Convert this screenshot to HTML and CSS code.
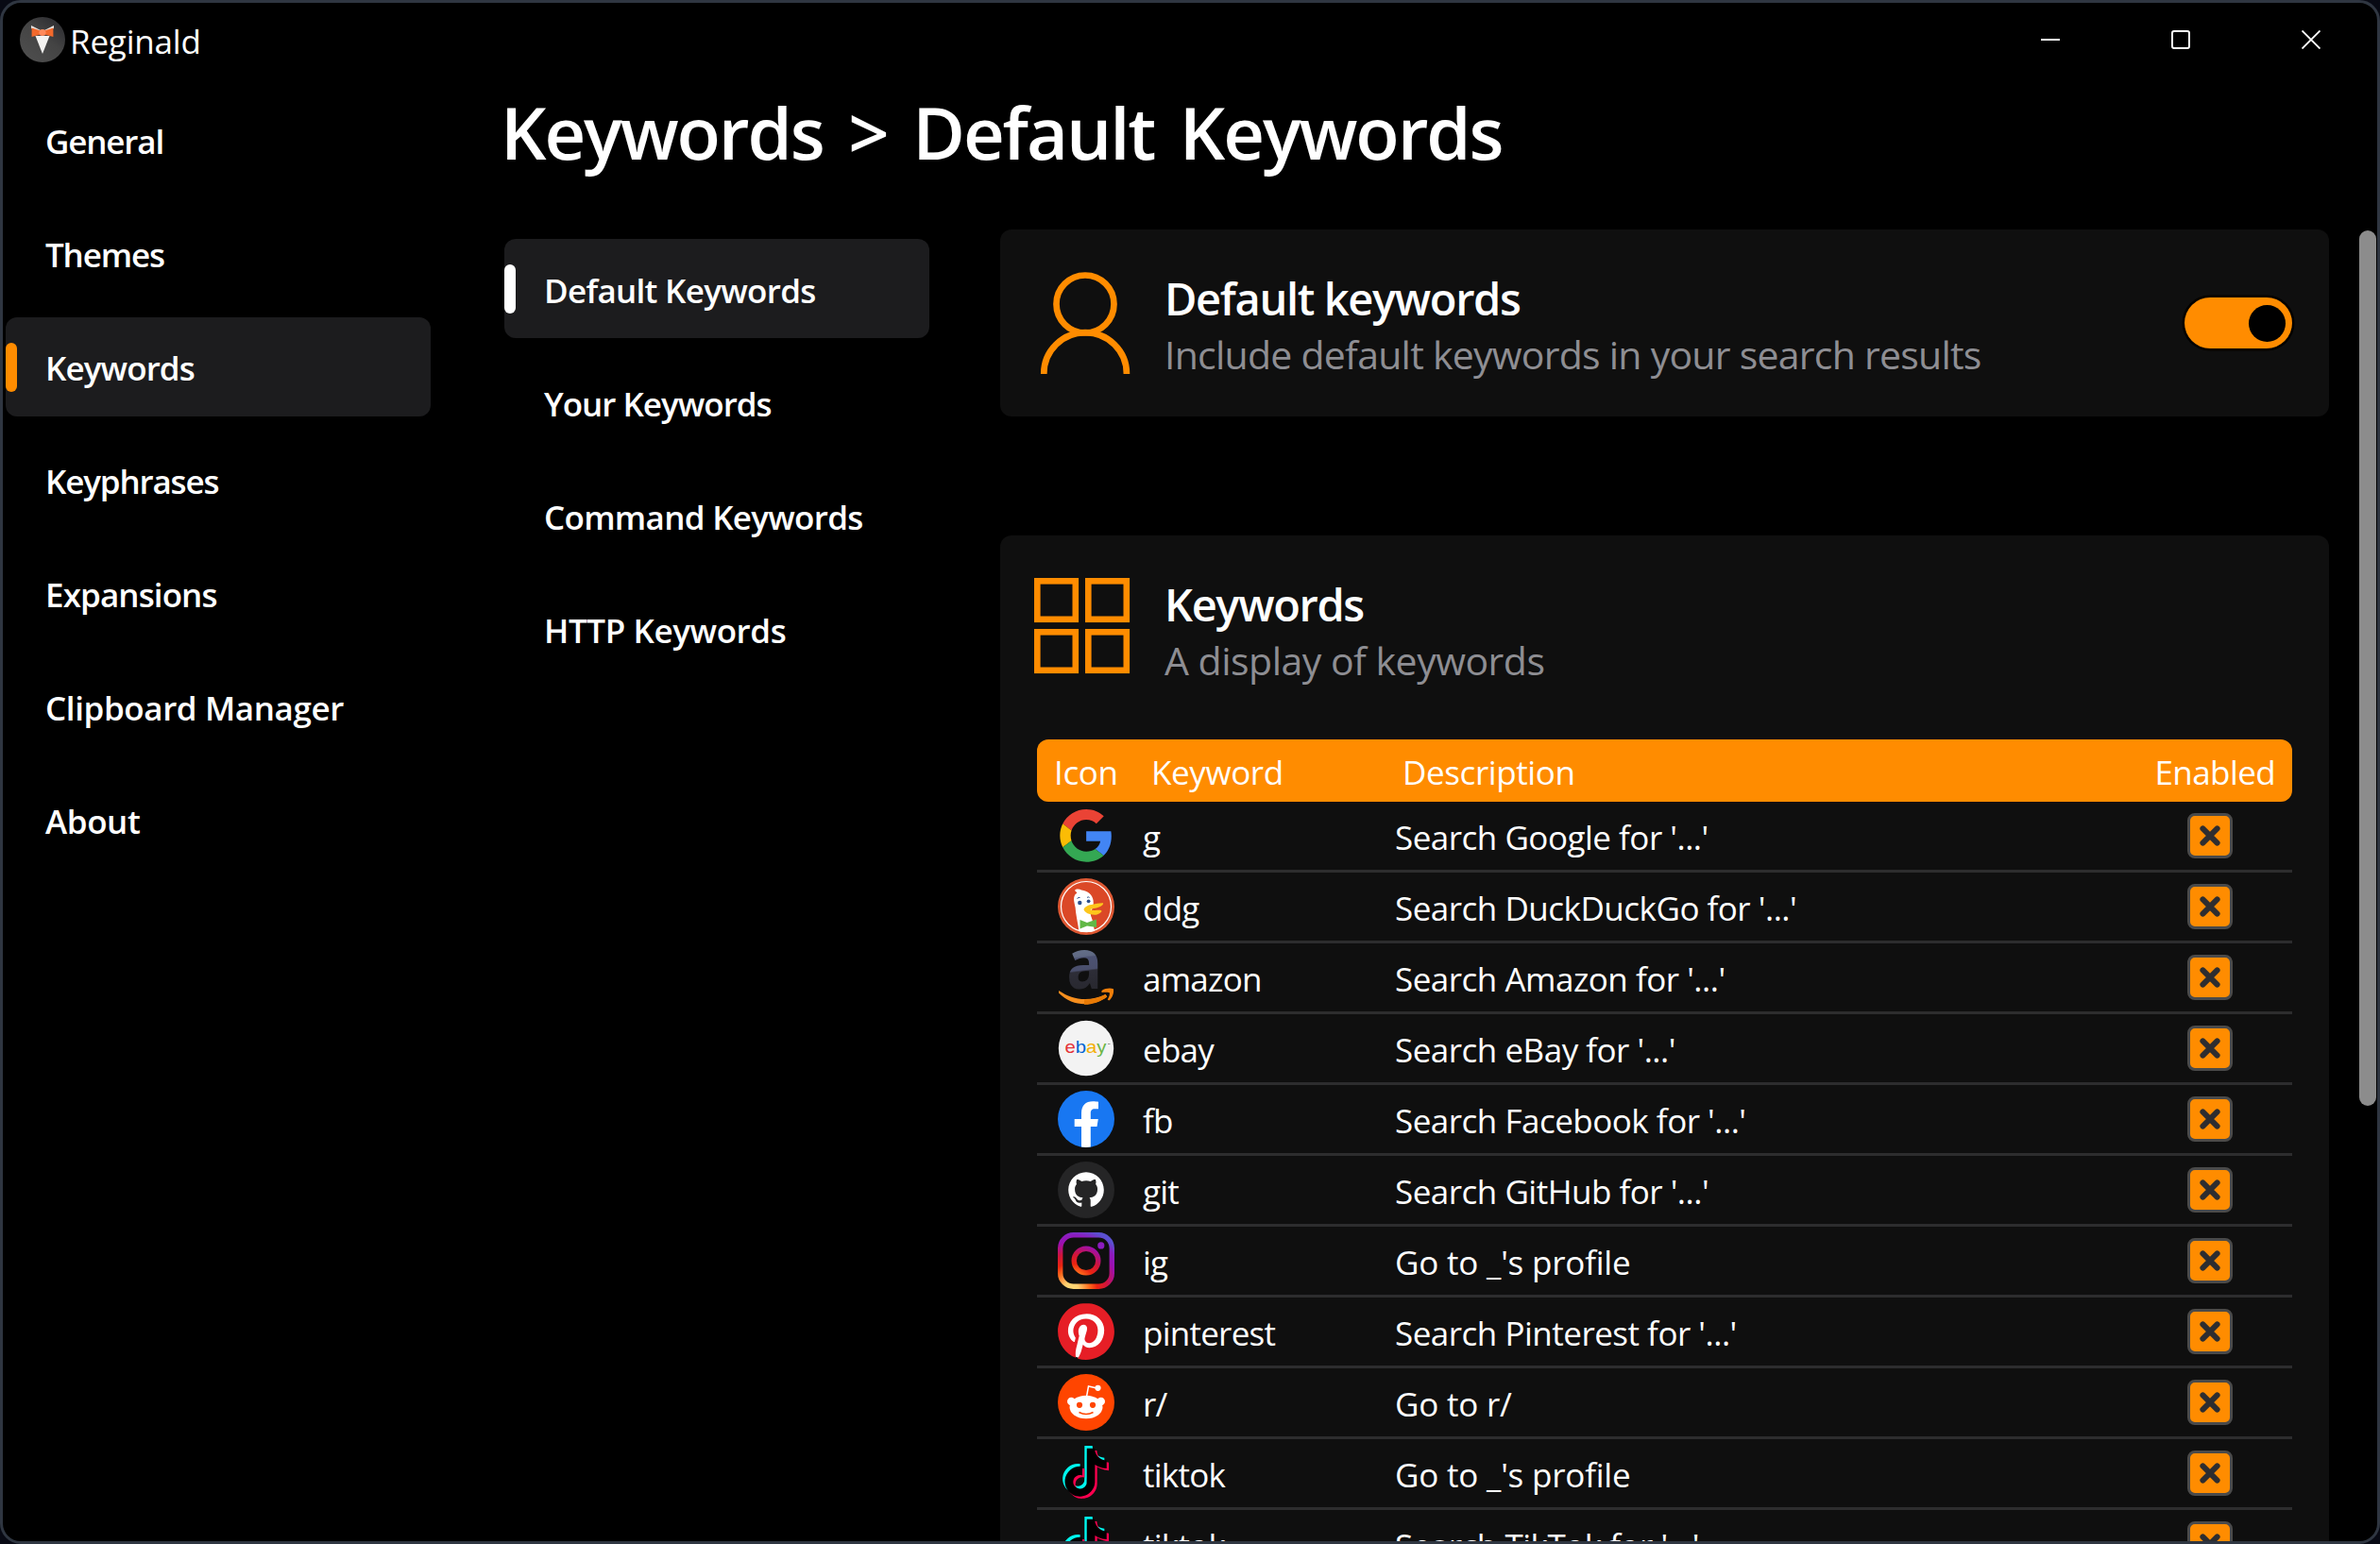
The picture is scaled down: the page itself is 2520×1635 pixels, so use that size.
FILE: index.html
```
<!DOCTYPE html>
<html lang="en">
<head>
<meta charset="utf-8">
<title>Reginald</title>
<link rel="stylesheet" href="styles.css">
</head>
<body>
<svg class="defs" aria-hidden="true">
  <defs>
    <path id="note" d="M12.525.02c1.31-.02 2.61-.01 3.91-.02.08 1.53.63 3.09 1.75 4.17 1.12 1.11 2.7 1.62 4.24 1.79v4.03c-1.44-.05-2.89-.35-4.2-.97-.57-.26-1.1-.59-1.62-.93-.01 2.92.01 5.84-.02 8.75-.08 1.4-.54 2.79-1.35 3.94-1.31 1.92-3.58 3.17-5.91 3.21-1.43.08-2.86-.31-4.08-1.03-2.02-1.19-3.44-3.37-3.65-5.71-.02-.5-.03-1-.01-1.49.18-1.9 1.12-3.72 2.58-4.96 1.66-1.44 3.98-2.13 6.15-1.72.02 1.48-.04 2.96-.04 4.44-.99-.32-2.15-.23-3.02.37-.63.41-1.11 1.04-1.36 1.75-.21.51-.15 1.07-.14 1.61.24 1.64 1.82 3.02 3.5 2.87 1.12-.01 2.19-.66 2.77-1.61.19-.33.4-.67.41-1.06.1-1.79.06-3.57.07-5.36.01-4.03-.01-8.05.02-12.07z"/>
    <symbol id="tiktok" viewBox="0 0 60 60">
      <use href="#note" transform="translate(1.800 1) scale(2.120)" fill="#00f7ef"/>
      <use href="#note" transform="translate(6.500 6) scale(2.120)" fill="#ff004f"/>
      <use href="#note" transform="translate(4.200 3.800) scale(2.120)" fill="#000"/>
    </symbol>
    <symbol id="cross" viewBox="0 0 22 22">
      <path d="M3.4 3.4 18.6 18.6M18.6 3.4 3.4 18.6" stroke="#2d2d30" stroke-width="6" stroke-linecap="round"/>
    </symbol>
    <linearGradient id="logo-bg" x1="0" y1="1" x2=".8" y2="0">
      <stop offset="0" stop-color="#505050"/><stop offset=".6" stop-color="#444"/><stop offset="1" stop-color="#2c2c30"/>
    </linearGradient>
    <linearGradient id="amazon-a" gradientUnits="userSpaceOnUse" x1="24" y1="1" x2="29" y2="43">
      <stop offset="0" stop-color="#646f88"/><stop offset=".16" stop-color="#5f6983"/><stop offset=".2" stop-color="#4c5272"/><stop offset=".5" stop-color="#4a4f6c"/><stop offset=".54" stop-color="#2d2d37"/><stop offset="1" stop-color="#28282f"/>
    </linearGradient>
    <radialGradient id="insta" gradientUnits="userSpaceOnUse" cx="14" cy="61" r="66">
      <stop offset="0" stop-color="#ffdd78"/><stop offset=".12" stop-color="#ffd070"/><stop offset=".3" stop-color="#ff6a1c"/><stop offset=".42" stop-color="#ea2410"/><stop offset=".58" stop-color="#d0143c"/><stop offset=".76" stop-color="#9c10b0"/><stop offset=".88" stop-color="#8c1cc0"/><stop offset="1" stop-color="#5a50d0"/>
    </radialGradient>
  </defs>
</svg>

<div class="window">
  <header class="titlebar">
    <svg class="logo" viewBox="0 0 48 48">
      <circle cx="24" cy="24" r="24" fill="url(#logo-bg)"/>
      <path d="M16.5 20h15L24 39z" fill="#f4f3f1"/>
      <path d="M12 9l10 5h4l10-5v3l-9 5h-6l-9-5z" fill="#e4e2e0"/>
      <path d="M12.600 11.500L22 14.500h4l9.400-3V21L26 18.500h-4L12.600 21z" fill="#f2692c"/>
      <circle cx="24" cy="16.500" r="3.600" fill="#ff8a5c"/>
    </svg>
    <span class="app-name">Reginald</span>
    <div class="controls">
      <svg viewBox="0 0 20 20"><path d="M0 10h20" stroke="#fff" stroke-width="2"/></svg>
      <svg viewBox="0 0 20 20"><rect x="1" y="1" width="18" height="18" rx="2" fill="none" stroke="#fff" stroke-width="2"/></svg>
      <svg viewBox="0 0 20 20"><path d="M.5.5l19 19M19.500.5L.5 19.500" stroke="#fff" stroke-width="1.800"/></svg>
    </div>
  </header>

  <div class="body">
    <nav class="menu sidebar">
      <a class="item tight">General</a>
      <a class="item tight">Themes</a>
      <a class="item active">Keywords</a>
      <a class="item tight">Keyphrases</a>
      <a class="item">Expansions</a>
      <a class="item loose">Clipboard Manager</a>
      <a class="item loose">About</a>
    </nav>

    <main>
      <h1>Keywords &gt; Default Keywords</h1>
      <div class="columns">
        <nav class="menu subnav">
          <a class="item active">Default Keywords</a>
          <a class="item tight">Your Keywords</a>
          <a class="item">Command Keywords</a>
          <a class="item loose">HTTP Keywords</a>
        </nav>

        <div class="panel">
          <section class="card setting">
            <svg class="card-icon" viewBox="0 0 102 110">
              <g fill="none" stroke="#ff8c00" stroke-width="6.700">
                <circle cx="54" cy="34" r="30.500"/>
                <path d="M10.300 108V107.500a43.800 43.300 0 0 1 87.600 0V108"/>
              </g>
            </svg>
            <div class="heading">
              <h2>Default keywords</h2>
              <p class="long">Include default keywords in your search results</p>
            </div>
            <div class="toggle"><span class="knob"></span></div>
          </section>

          <section class="card list">
            <div class="list-head">
              <svg class="card-icon" viewBox="0 0 102 102">
                <g fill="none" stroke="#ff8c00" stroke-width="6.600">
                  <rect x="3.300" y="3.300" width="40.500" height="40.500"/>
                  <rect x="57.300" y="3.300" width="40.500" height="40.500"/>
                  <rect x="3.300" y="57.300" width="40.500" height="40.500"/>
                  <rect x="57.300" y="57.300" width="40.500" height="40.500"/>
                </g>
              </svg>
              <div class="heading">
                <h2>Keywords</h2>
                <p>A display of keywords</p>
              </div>
            </div>

            <div class="thead">
              <span>Icon</span><span>Keyword</span><span class="desc">Description</span><span class="enabled">Enabled</span>
            </div>

            <div class="row">
              <svg class="icon" viewBox="0 0 60 60">
                <g transform="translate(2.300 2) scale(1.160)">
                  <path fill="#ea4335" d="M24 9.500c3.540 0 6.710 1.220 9.210 3.600l6.850-6.850C35.900 2.380 30.470 0 24 0 14.620 0 6.510 5.380 2.560 13.220l7.980 6.190C12.430 13.720 17.740 9.500 24 9.500z"/>
                  <path fill="#4285f4" d="M46.980 24.550c0-1.570-.15-3.090-.38-4.550H24v9.020h12.940c-.58 2.960-2.260 5.480-4.780 7.180l7.730 6c4.510-4.180 7.090-10.360 7.090-17.650z"/>
                  <path fill="#fbbc05" d="M10.530 28.590c-.48-1.450-.76-2.990-.76-4.590s.27-3.140.76-4.590l-7.980-6.190C.92 16.460 0 20.120 0 24c0 3.880.92 7.540 2.560 10.780l7.970-6.190z"/>
                  <path fill="#34a853" d="M24 48c6.480 0 11.930-2.130 15.890-5.810l-7.730-6c-2.150 1.450-4.920 2.300-8.160 2.300-6.260 0-11.570-4.220-13.470-9.910l-7.980 6.190C6.510 42.620 14.620 48 24 48z"/>
                </g>
              </svg>
              <span class="key">g</span><span>Search Google for '...'</span><i class="check"><svg><use href="#cross"/></svg></i>
            </div>
            <div class="row">
              <svg class="icon" viewBox="0 0 60 60">
                <circle cx="30" cy="30" r="30" fill="#de5833"/>
                <circle cx="30" cy="30" r="26.500" fill="#db4827" stroke="#fff" stroke-width="1.200"/>
                <path d="M18 13c1-2 5-1.800 7-.6 7 .8 11.500 5 12.600 11 .8 5-1 9-2.600 12-1 3 1 6 2 10l2 10.600c-5 1.500-11 1.500-16.500.2C21 46 19 38 18.600 31c-.8-5-2.600-9-.6-13 .4-1 1.500-2 2.500-2.600z" fill="#fff"/>
                <path d="M27.500 33c1-3 5-4.800 9.500-5.300 3.500-.3 6.500-1.700 11-1.400 1 1.700-3.500 4.400-7 5.200-2 .4-5 .6-6.500 1.600 2 1.400 7 .4 11.500.8 1.500 1.500-1.500 3.200-4.500 4.600-6 1-13-1.500-14-5.500z" fill="#fdc61c"/>
                <circle cx="23.300" cy="26" r="2.200" fill="#2d4f8e"/><circle cx="32.600" cy="24.300" r="1.900" fill="#2d4f8e"/>
                <path d="M20.500 21.500q1.500-1.500 3-1M31 20.400q1.500-1 2.600 0" stroke="#2d4f8e" fill="none"/>
                <path d="M23.500 44l7.500 3 10-3.500v8.500L31 50.500l-7.500 3z" fill="#61b846"/>
              </svg>
              <span class="key">ddg</span><span>Search DuckDuckGo for '...'</span><i class="check"><svg><use href="#cross"/></svg></i>
            </div>
            <div class="row">
              <svg class="icon" viewBox="0 0 60 60">
                <text class="amazon-letter" x="9.500" y="42" textLength="37" lengthAdjust="spacingAndGlyphs" fill="url(#amazon-a)">a</text>
                <path d="M1.200 44C16 54.500 34 56 50.500 48l1.800 2.500C38 61 16 62 1 46.500z" fill="#f78f1e"/>
                <path d="M28 53.500c9 0 16-2 22.500-5.500l1.800 2.500C45 56 36 59 28 58.800z" fill="#e87a05"/>
                <path d="M46.500 44c4-2.600 9-3 12.500-1.800.6 4-1 9.500-4.800 12.400l-1.500-1c1.500-3 2.500-5.200 2.100-7.400-2.500-.8-5.500-.5-8.300-.2z" fill="#f07f0a"/>
              </svg>
              <span class="key">amazon</span><span>Search Amazon for '...'</span><i class="check"><svg><use href="#cross"/></svg></i>
            </div>
            <div class="row">
              <svg class="icon" viewBox="0 0 60 60">
                <circle cx="30" cy="30" r="29.200" fill="#f3f3f3"/>
                <text class="ebay-letters" x="7.500" y="35" textLength="44" lengthAdjust="spacingAndGlyphs"><tspan fill="#e53238">e</tspan><tspan fill="#0064d2">b</tspan><tspan fill="#f5af02">a</tspan><tspan fill="#6cb544">y</tspan></text>
                <path d="M53 25.500h2.500" stroke="#999"/>
              </svg>
              <span class="key">ebay</span><span>Search eBay for '...'</span><i class="check"><svg><use href="#cross"/></svg></i>
            </div>
            <div class="row">
              <svg class="icon" viewBox="0 0 60 60">
                <circle cx="30" cy="30" r="30" fill="#1877f2"/>
                <path d="M25 59.600V38h-7.300v-8H25v-6c0-8.500 4.500-12.800 12-12.800 2.500 0 4.600.2 6 .5v7.600h-3.700c-3.500 0-4.500 1.900-4.500 4.400V30h8l-1.300 8h-6.700v21.600c-3 .5-7 .5-9.800 0z" fill="#fff"/>
              </svg>
              <span class="key">fb</span><span>Search Facebook for '...'</span><i class="check"><svg><use href="#cross"/></svg></i>
            </div>
            <div class="row">
              <svg class="icon" viewBox="0 0 60 60">
                <circle cx="30" cy="30" r="30" fill="#252526"/>
                <path transform="translate(11.200 11.200) scale(2.350)" fill="#fff" d="M8 0C3.580 0 0 3.580 0 8c0 3.540 2.290 6.530 5.470 7.590.4.070.55-.17.55-.38 0-.19-.01-.82-.01-1.490-2.010.37-2.530-.49-2.690-.94-.09-.23-.48-.94-.82-1.130-.28-.15-.68-.52-.01-.53.63-.01 1.080.58 1.230.82.72 1.210 1.870.87 2.330.66.07-.52.28-.87.51-1.070-1.780-.2-3.640-.89-3.640-3.950 0-.87.31-1.590.82-2.150-.08-.2-.36-1.020.08-2.120 0 0 .67-.21 2.200.82.64-.18 1.320-.27 2-.27s1.360.09 2 .27c1.530-1.040 2.200-.82 2.200-.82.44 1.100.16 1.920.08 2.120.51.56.82 1.270.82 2.150 0 3.070-1.870 3.750-3.650 3.950.29.25.54.73.54 1.480 0 1.070-.01 1.930-.01 2.200 0 .21.15.46.55.38A8.010 8.010 0 0 0 16 8c0-4.420-3.580-8-8-8z"/>
              </svg>
              <span class="key">git</span><span>Search GitHub for '...'</span><i class="check"><svg><use href="#cross"/></svg></i>
            </div>
            <div class="row">
              <svg class="icon" viewBox="0 0 60 60">
                <g fill="none" stroke="url(#insta)" stroke-width="5.400">
                  <rect x="2.700" y="2.700" width="54.600" height="54.600" rx="14"/>
                  <circle cx="30" cy="30" r="12.800"/>
                </g>
                <circle cx="45.800" cy="13.900" r="3.600" fill="#8c1cc0"/>
              </svg>
              <span class="key">ig</span><span class="wide">Go to _'s profile</span><i class="check"><svg><use href="#cross"/></svg></i>
            </div>
            <div class="row">
              <svg class="icon" viewBox="0 0 24 24">
                <circle cx="12" cy="12" r="11.600" fill="#fff"/>
                <path fill="#e61e26" d="M12.017 0C5.396 0 .029 5.367.029 11.987c0 5.079 3.158 9.417 7.618 11.162-.105-.949-.199-2.403.041-3.439.219-.937 1.406-5.957 1.406-5.957s-.359-.72-.359-1.781c0-1.663.967-2.911 2.168-2.911 1.024 0 1.518.769 1.518 1.688 0 1.029-.653 2.567-.992 3.992-.285 1.193.6 2.165 1.775 2.165 2.128 0 3.768-2.245 3.768-5.487 0-2.861-2.063-4.869-5.008-4.869-3.410 0-5.409 2.562-5.409 5.199 0 1.033.394 2.143.889 2.741.099.12.112.225.085.345-.09.375-.293 1.199-.334 1.363-.053.225-.172.271-.401.165-1.495-.69-2.433-2.878-2.433-4.646 0-3.776 2.748-7.252 7.920-7.252 4.158 0 7.392 2.967 7.392 6.923 0 4.135-2.607 7.462-6.233 7.462-1.214 0-2.354-.629-2.758-1.379l-.749 2.848c-.269 1.045-1.004 2.352-1.498 3.146 1.123.345 2.306.535 3.550.535 6.607 0 11.985-5.365 11.985-11.987C23.970 5.390 18.592.026 11.985.026z"/>
              </svg>
              <span class="key">pinterest</span><span>Search Pinterest for '...'</span><i class="check"><svg><use href="#cross"/></svg></i>
            </div>
            <div class="row">
              <svg class="icon" viewBox="0 0 60 60">
                <circle cx="30" cy="30" r="30" fill="#ff4500"/>
                <path d="M30.500 24l2-11 9 2" fill="none" stroke="#fff" stroke-width="1.500"/>
                <circle cx="42.500" cy="14.800" r="3.100" fill="#fff"/>
                <circle cx="14.300" cy="29" r="4.300" fill="#fff"/><circle cx="45.700" cy="29" r="4.300" fill="#fff"/>
                <ellipse cx="30" cy="35" rx="17.500" ry="12.200" fill="#fff"/>
                <circle cx="23" cy="32.800" r="3.100" fill="#ff4500"/><circle cx="37" cy="32.800" r="3.100" fill="#ff4500"/>
                <path d="M22.500 40.500q7.500 4 15 0" fill="none" stroke="#ff4500" stroke-width="1.500"/>
              </svg>
              <span class="key">r/</span><span class="wide">Go to r/</span><i class="check"><svg><use href="#cross"/></svg></i>
            </div>
            <div class="row">
              <svg class="icon"><use href="#tiktok"/></svg>
              <span class="key">tiktok</span><span class="wide">Go to _'s profile</span><i class="check"><svg><use href="#cross"/></svg></i>
            </div>
            <div class="row">
              <svg class="icon"><use href="#tiktok"/></svg>
              <span class="key">tiktok</span><span>Search TikTok for '...'</span><i class="check"><svg><use href="#cross"/></svg></i>
            </div>
          </section>
        </div>
        <div class="scrollbar"></div>
      </div>
    </main>
  </div>
</div>
</body>
</html>
```
FILE: styles.css
```
* { box-sizing: border-box; }

body {
  margin: 0;
  height: 1635px;
  overflow: hidden;
  background: #080a14;
  color: #fff;
  font: 400 35px "Open Sans", "Noto Sans", sans-serif;
}

svg { display: block; flex: none; }
.defs { position: absolute; width: 0; height: 0; }

.window {
  display: flex;
  flex-direction: column;
  width: 2520px;
  height: 1635px;
  border: 3px solid #2f3641;
  border-radius: 22px;
  background: #000;
  overflow: hidden;
}

.titlebar {
  display: flex;
  align-items: center;
  flex: none;
  height: 78px;
  padding: 0 60px 0 18px;
}
.logo { width: 48px; height: 48px; }
.app-name { padding: 2px 0 0 5px; letter-spacing: -.2px; }
.controls { display: flex; gap: 118px; margin-left: auto; }
.controls svg { width: 20px; height: 20px; }

.body { display: flex; flex: 1; min-height: 0; }

.menu { display: flex; flex-direction: column; gap: 15px; flex: none; }
.sidebar { width: 531px; padding: 15px 0 0 3px; }
.subnav { width: 525px; padding-top: 10px; }

.item {
  display: flex;
  align-items: center;
  width: 450px;
  height: 105px;
  padding: 2px 0 0 42px;
  border-radius: 12px;
  font-weight: 600;
  letter-spacing: -.9px;
}
.item.tight { letter-spacing: -1.150px; }
.item.loose { letter-spacing: -.4px; }
.subnav .item { padding-top: 4px; letter-spacing: -.7px; }
.subnav .item.tight { letter-spacing: -1px; }
.subnav .item.loose { letter-spacing: -.4px; }
.item.active { padding-left: 0; background: #1c1c1e; }
.item.active::before {
  content: "";
  width: 12px;
  height: 52px;
  margin: -2px 30px 0 0;
  border-radius: 6px;
  background: #ff8c00;
}
.subnav .item.active::before { margin-top: -4px; background: #fff; }

main { display: flex; flex-direction: column; flex: 1; min-width: 0; }
h1 {
  margin: 0 0 45px -4px;
  font-size: 76px;
  font-weight: 600;
  line-height: 117px;
  letter-spacing: -2.100px;
  word-spacing: 9px;
}
.columns { display: flex; flex: 1; min-height: 0; }

.panel { width: 1407px; height: 1389px; overflow: hidden; }
.card { border-radius: 12px; background: #0f0f0f; }
.setting {
  display: flex;
  align-items: flex-start;
  height: 198px;
  margin-bottom: 126px;
  padding: 44px 39px 0 36px;
}
.setting .card-icon { width: 102px; height: 110px; margin-top: 1px; }
.heading { flex: 1; padding-left: 36px; white-space: nowrap; }
h2, .heading p { margin: 0; line-height: 59px; }
h2 { font-size: 47px; font-weight: 600; letter-spacing: -1.350px; }
.heading p { font-size: 41px; letter-spacing: -.5px; color: #8e8e93; }
.heading p.long { letter-spacing: -.75px; }

.toggle {
  display: flex;
  align-items: center;
  justify-content: flex-end;
  width: 114px;
  height: 54px;
  margin-top: 28px;
  padding-right: 7px;
  border-radius: 27px;
  background: #ff8c00;
  box-shadow: 0 0 0 2.500px #000;
}
.knob { width: 39px; height: 39px; border-radius: 50%; background: #000; }

.list { padding: 44px 39px 0; }
.list-head { display: flex; height: 172px; margin-left: -3px; }
.list-head .card-icon { width: 102px; height: 102px; margin-top: 1px; }

.thead, .row {
  display: grid;
  align-items: center;
  white-space: nowrap;
}
.thead {
  grid-template-columns: 103px 266px 1fr auto;
  height: 65.500px;
  padding: 3px 18px 0 18px;
  border-radius: 12px;
  background: #ff8c00;
  letter-spacing: -.4px;
}
.enabled { letter-spacing: -.6px; }
.row {
  grid-template-columns: 112px 267px 1fr 48px;
  height: 75px;
  padding: 0 63px 0 0;
  border-bottom: 3px solid #2d2d2e;
  letter-spacing: -.5px;
}
.row span { padding-top: 4px; }
.row .key { letter-spacing: -.75px; }
.row .wide { letter-spacing: -.2px; }
.icon { width: 60px; height: 60px; margin-left: 22px; overflow: visible; }
.amazon-letter { font: 700 74px "Open Sans", sans-serif; }
.ebay-letters { font: 400 18.500px "Liberation Sans", sans-serif; letter-spacing: 0; }

.check {
  display: grid;
  place-items: center;
  width: 48px;
  height: 48px;
  border: 3px solid #4a4a4a;
  border-radius: 8px;
  background: #ff8c00;
}
.check svg { width: 22px; height: 22px; }

.scrollbar {
  width: 18px;
  height: 927px;
  margin: 1px 0 0 31.500px;
  border-radius: 9px;
  background: #8c8c8c;
}
```
